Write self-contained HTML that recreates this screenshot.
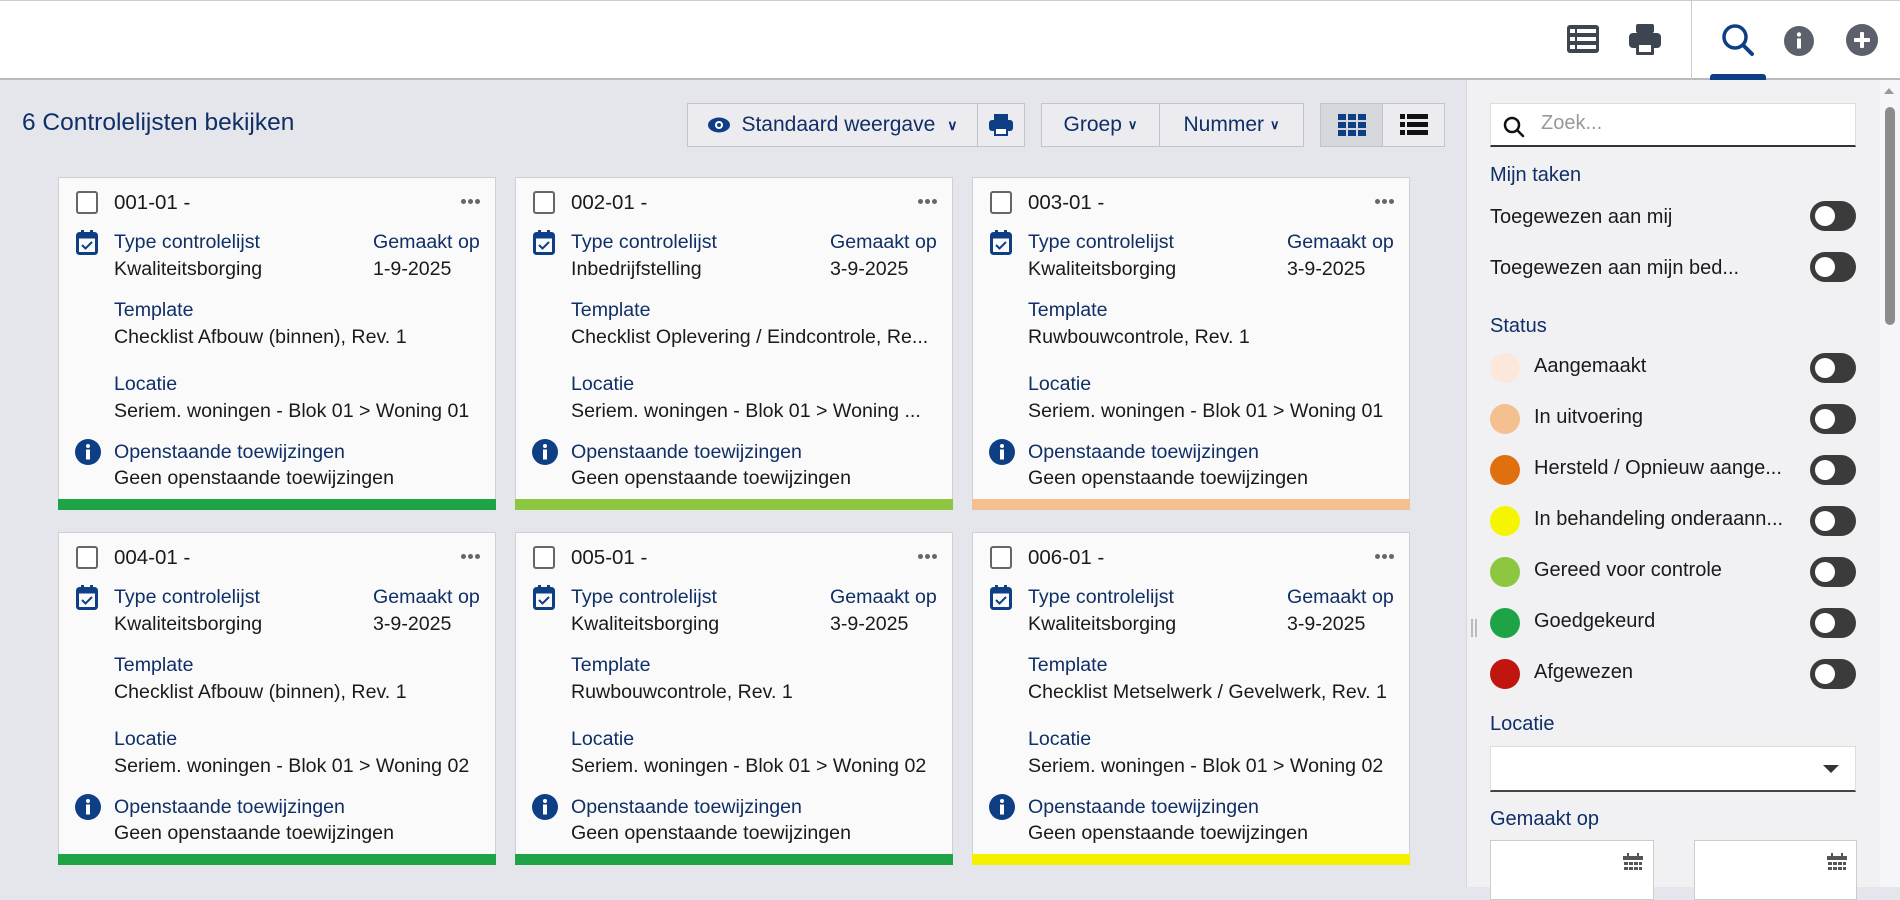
<!DOCTYPE html>
<html><head><meta charset="utf-8"><style>
*{box-sizing:border-box;margin:0;padding:0}
body{width:1900px;height:887px;overflow:hidden;background:#e5e6eb;font-family:"Liberation Sans",sans-serif;position:relative;color:#1a1a1a}
.abs{position:absolute}
.hdr{left:0;top:0;width:1900px;height:80px;background:#fff;border-top:1px solid #ccc;border-bottom:2px solid #b9b9bd}
.navy{color:#0f2f66}
.btn{position:absolute;top:103px;height:44px;border:1px solid #c3c4c9;background:#ececf0;font-size:21px;color:#0f2f66;display:flex;align-items:center;justify-content:center}
.card{position:absolute;width:438px;height:333px;background:#fafafa;border:1px solid #cfd0d4}
.card .t{position:absolute;font-size:19.6px;line-height:26px;white-space:nowrap}
.card .l{color:#0f2f66}
.card .bar{position:absolute;left:-1px;right:-1px;bottom:-1px;height:11px}
.cb{position:absolute;left:17px;top:13px;width:22px;height:23px;border:2px solid #666;border-radius:3px;background:#fff}
.dots{position:absolute;left:402px;top:21px;display:flex;gap:2px}
.dots i{display:block;width:5px;height:5px;border-radius:50%;background:#666}
.side{left:1466px;top:80px;width:434px;height:807px;background:#f1f1f4;border-left:1px solid #d8d8dc}
.st{position:absolute;font-size:20px;white-space:nowrap}
.tg{position:absolute;left:1810px;width:46px;height:30px;border-radius:15px;background:#3b3b3b}
.tg:after{content:"";position:absolute;left:5px;top:5px;width:20px;height:20px;border-radius:50%;background:#fff}
.dot{position:absolute;left:1490px;width:30px;height:30px;border-radius:50%}
</style></head><body>
<div class="abs hdr"></div>
<svg class="abs" style="left:1566px;top:24px" width="34" height="30" viewBox="0 0 34 30"><rect x="1" y="1" width="32" height="28" rx="3" fill="#3d4550"/><g fill="#fff"><rect x="4" y="5" width="5" height="4"/><rect x="11" y="5" width="19" height="4"/><rect x="4" y="13" width="5" height="4"/><rect x="11" y="13" width="19" height="4"/><rect x="4" y="21" width="5" height="4"/><rect x="11" y="21" width="19" height="4"/></g></svg>
<svg class="abs" style="left:1628px;top:23px" width="34" height="34" viewBox="0 0 34 34"><rect x="8" y="1" width="18" height="9" rx="2" fill="#3d4550"/><rect x="1" y="10" width="32" height="15" rx="4" fill="#3d4550"/><rect x="8" y="19" width="18" height="13" rx="1" fill="#3d4550"/><rect x="11" y="22" width="12" height="7" fill="#fff"/></svg>
<div class="abs" style="left:1691px;top:0;width:1px;height:80px;background:#ccc"></div>
<svg class="abs" style="left:1721px;top:23px" width="34" height="34" viewBox="0 0 34 34"><circle cx="14" cy="14" r="11" fill="none" stroke="#0e3f85" stroke-width="3.5"/><line x1="22" y1="22" x2="31" y2="31" stroke="#0e3f85" stroke-width="4" stroke-linecap="round"/></svg>
<div class="abs" style="left:1710px;top:74px;width:56px;height:6px;background:#0e3f85;border-radius:3px 3px 0 0"></div>
<svg class="abs" style="left:1784px;top:26px" width="30" height="30" viewBox="0 0 30 30"><circle cx="15" cy="15" r="15" fill="#5b606a"/><circle cx="15" cy="8.5" r="2.2" fill="#fff"/><rect x="13" y="12.5" width="4" height="10" fill="#fff"/></svg>
<svg class="abs" style="left:1846px;top:24px" width="32" height="32" viewBox="0 0 32 32"><circle cx="16" cy="16" r="16" fill="#5b606a"/><rect x="14" y="8" width="4" height="16" rx="1" fill="#fff"/><rect x="8" y="14" width="16" height="4" rx="1" fill="#fff"/></svg>

<div class="abs navy" style="left:22px;top:109px;font-size:24.5px">6 Controlelijsten bekijken</div>
<div class="btn" style="left:687px;width:291px"><svg width="24" height="16" viewBox="0 0 24 16" style="margin-right:10px"><ellipse cx="12" cy="8" rx="11" ry="7.5" fill="#0e3f85"/><circle cx="12" cy="8" r="4" fill="#fff"/><circle cx="12" cy="8" r="2" fill="#0e3f85"/></svg>Standaard weergave<span style="margin-left:12px;font-size:14px;font-weight:bold">&#8744;</span></div>
<div class="btn" style="left:977px;width:48px"><svg width="24" height="22" viewBox="0 0 24 22"><rect x="5" y="0" width="14" height="6" fill="#0e3f85"/><rect x="0" y="6" width="24" height="11" rx="3" fill="#0e3f85"/><rect x="5" y="13" width="14" height="9" fill="#0e3f85"/><rect x="7" y="15" width="10" height="5" fill="#fff"/></svg></div>
<div class="btn" style="left:1041px;width:119px">Groep<span style="margin-left:6px;font-size:13px;font-weight:bold">&#8744;</span></div>
<div class="btn" style="left:1159px;width:145px">Nummer<span style="margin-left:6px;font-size:13px;font-weight:bold">&#8744;</span></div>
<div class="btn" style="left:1320px;width:63px;background:#d6d7db"><svg width="28" height="22" viewBox="0 0 28 22" fill="#0e3f85"><rect x="0" y="0" width="8" height="6"/><rect x="10" y="0" width="8" height="6"/><rect x="20" y="0" width="8" height="6"/><rect x="0" y="8" width="8" height="6"/><rect x="10" y="8" width="8" height="6"/><rect x="20" y="8" width="8" height="6"/><rect x="0" y="16" width="8" height="6"/><rect x="10" y="16" width="8" height="6"/><rect x="20" y="16" width="8" height="6"/></svg></div>
<div class="btn" style="left:1382px;width:63px"><svg width="28" height="22" viewBox="0 0 28 22" fill="#111"><rect x="0" y="0" width="5" height="5"/><rect x="7" y="0" width="21" height="5"/><rect x="0" y="8" width="5" height="5"/><rect x="7" y="8" width="21" height="5"/><rect x="0" y="16" width="5" height="5"/><rect x="7" y="16" width="21" height="5"/></svg></div>

<div id="cards"></div>

<div class="abs side"></div>
<div class="abs" style="left:1490px;top:103px;width:366px;height:44px;background:#fff;border:1px solid #ddd;border-bottom:2px solid #333"></div>
<svg class="abs" style="left:1503px;top:116px" width="22" height="22" viewBox="0 0 22 22"><circle cx="9" cy="9" r="7" fill="none" stroke="#111" stroke-width="2.5"/><line x1="14" y1="14" x2="20" y2="20" stroke="#111" stroke-width="2.5" stroke-linecap="round"/></svg>
<div class="st" style="left:1541px;top:112px;color:#999">Zoek...</div>
<div class="st navy" style="left:1490px;top:164px">Mijn taken</div>
<div class="st" style="left:1490px;top:206px">Toegewezen aan mij</div>
<div class="tg" style="top:201px"></div>
<div class="st" style="left:1490px;top:257px">Toegewezen aan mijn bed...</div>
<div class="tg" style="top:252px"></div>
<div class="st navy" style="left:1490px;top:315px">Status</div>
<div id="status"></div>
<div class="st navy" style="left:1490px;top:713px">Locatie</div>
<div class="abs" style="left:1490px;top:746px;width:366px;height:46px;background:#fff;border:1px solid #ddd;border-bottom:2px solid #444"></div>
<div class="abs" style="left:1823px;top:765px;width:0;height:0;border-left:8px solid transparent;border-right:8px solid transparent;border-top:8px solid #333"></div>
<div class="st navy" style="left:1490px;top:808px">Gemaakt op</div>
<div class="abs" style="left:1490px;top:840px;width:164px;height:60px;background:#fff;border:1px solid #ccc"></div>
<div class="abs" style="left:1694px;top:840px;width:163px;height:60px;background:#fff;border:1px solid #ccc"></div>
<svg class="abs" style="left:1623px;top:853px" width="20" height="20" viewBox="0 0 20 20" fill="#555"><rect x="0" y="3" width="20" height="4"/><rect x="4" y="0" width="2" height="4"/><rect x="14" y="0" width="2" height="4"/><rect x="1" y="9" width="4" height="3"/><rect x="6" y="9" width="4" height="3"/><rect x="11" y="9" width="4" height="3"/><rect x="16" y="9" width="3" height="3"/><rect x="1" y="14" width="4" height="3"/><rect x="6" y="14" width="4" height="3"/><rect x="11" y="14" width="4" height="3"/><rect x="16" y="14" width="3" height="3"/></svg>
<svg class="abs" style="left:1827px;top:853px" width="20" height="20" viewBox="0 0 20 20" fill="#555"><rect x="0" y="3" width="20" height="4"/><rect x="4" y="0" width="2" height="4"/><rect x="14" y="0" width="2" height="4"/><rect x="1" y="9" width="4" height="3"/><rect x="6" y="9" width="4" height="3"/><rect x="11" y="9" width="4" height="3"/><rect x="16" y="9" width="3" height="3"/><rect x="1" y="14" width="4" height="3"/><rect x="6" y="14" width="4" height="3"/><rect x="11" y="14" width="4" height="3"/><rect x="16" y="14" width="3" height="3"/></svg>
<div class="abs" style="left:1880px;top:80px;width:20px;height:807px;background:#f6f6f8"></div>
<div class="abs" style="left:1884px;top:88px;width:0;height:0;border-left:5px solid transparent;border-right:5px solid transparent;border-bottom:6px solid #999"></div>
<div class="abs" style="left:1885px;top:107px;width:10px;height:218px;background:#8c8c8c;border-radius:5px"></div>
<div class="abs" style="left:1471px;top:619px;width:2px;height:18px;background:#bbb"></div>
<div class="abs" style="left:1475px;top:619px;width:2px;height:18px;background:#bbb"></div>

<script>
var cards=[
["001-01 -","Kwaliteitsborging","1-9-2025","Checklist Afbouw (binnen), Rev. 1","Seriem. woningen - Blok 01 > Woning 01","#1fa347"],
["002-01 -","Inbedrijfstelling","3-9-2025","Checklist Oplevering / Eindcontrole, Re...","Seriem. woningen - Blok 01 > Woning ...","#8dc63f"],
["003-01 -","Kwaliteitsborging","3-9-2025","Ruwbouwcontrole, Rev. 1","Seriem. woningen - Blok 01 > Woning 01","#f5c08f"],
["004-01 -","Kwaliteitsborging","3-9-2025","Checklist Afbouw (binnen), Rev. 1","Seriem. woningen - Blok 01 > Woning 02","#1fa347"],
["005-01 -","Kwaliteitsborging","3-9-2025","Ruwbouwcontrole, Rev. 1","Seriem. woningen - Blok 01 > Woning 02","#1fa347"],
["006-01 -","Kwaliteitsborging","3-9-2025","Checklist Metselwerk / Gevelwerk, Rev. 1","Seriem. woningen - Blok 01 > Woning 02","#f7ef00"]];
var xs=[58,515,972],ys=[177,532],h="";
function esc(s){return s.replace(/&/g,"&amp;").replace(/>/g,"&gt;")}
cards.forEach(function(c,i){
var x=xs[i%3],y=ys[Math.floor(i/3)];
h+='<div class="card" style="left:'+x+'px;top:'+y+'px"><div class="cb"></div>'+
'<div class="t" style="left:55px;top:12px;font-size:20.5px">'+c[0]+'</div>'+
'<div class="dots"><i></i><i></i><i></i></div>'+
'<svg style="position:absolute;left:17px;top:51px" width="22" height="26" viewBox="0 0 22 26"><rect x="1.5" y="4.5" width="19" height="20" rx="2" fill="none" stroke="#0e3f85" stroke-width="3"/><rect x="1.5" y="4.5" width="19" height="5" fill="#0e3f85"/><rect x="5" y="1" width="3" height="5" fill="#0e3f85"/><rect x="14" y="1" width="3" height="5" fill="#0e3f85"/><path d="M6 16l3.5 3.5L16 13" fill="none" stroke="#0e3f85" stroke-width="2"/></svg>'+
'<div class="t l" style="left:55px;top:51px">Type controlelijst</div>'+
'<div class="t" style="left:55px;top:78px">'+c[1]+'</div>'+
'<div class="t l" style="left:314px;top:51px">Gemaakt op</div>'+
'<div class="t" style="left:314px;top:78px">'+c[2]+'</div>'+
'<div class="t l" style="left:55px;top:119px">Template</div>'+
'<div class="t" style="left:55px;top:146px">'+esc(c[3])+'</div>'+
'<div class="t l" style="left:55px;top:193px">Locatie</div>'+
'<div class="t" style="left:55px;top:220px">'+esc(c[4])+'</div>'+
'<svg style="position:absolute;left:16px;top:261px" width="26" height="26" viewBox="0 0 26 26"><circle cx="13" cy="13" r="13" fill="#0e3f85"/><circle cx="13" cy="7" r="2" fill="#fff"/><rect x="11" y="10.5" width="4" height="10" fill="#fff"/></svg>'+
'<div class="t l" style="left:55px;top:261px">Openstaande toewijzingen</div>'+
'<div class="t" style="left:55px;top:287px">Geen openstaande toewijzingen</div>'+
'<div class="bar" style="background:'+c[5]+'"></div></div>';});
document.getElementById("cards").innerHTML=h;
var st=[["Aangemaakt","#fbe8da"],["In uitvoering","#f5c08f"],["Hersteld / Opnieuw aange...","#e0700f"],["In behandeling onderaann...","#f5f500"],["Gereed voor controle","#8dc63f"],["Goedgekeurd","#1fa347"],["Afgewezen","#c0160f"]],s="";
st.forEach(function(d,i){var c=368+51*i;
s+='<div class="dot" style="top:'+(c-15)+'px;background:'+d[1]+'"></div><div class="st" style="left:1534px;top:'+(c-13)+'px">'+d[0]+'</div><div class="tg" style="top:'+(c-15)+'px"></div>';});
document.getElementById("status").innerHTML=s;
</script>
</body></html>
